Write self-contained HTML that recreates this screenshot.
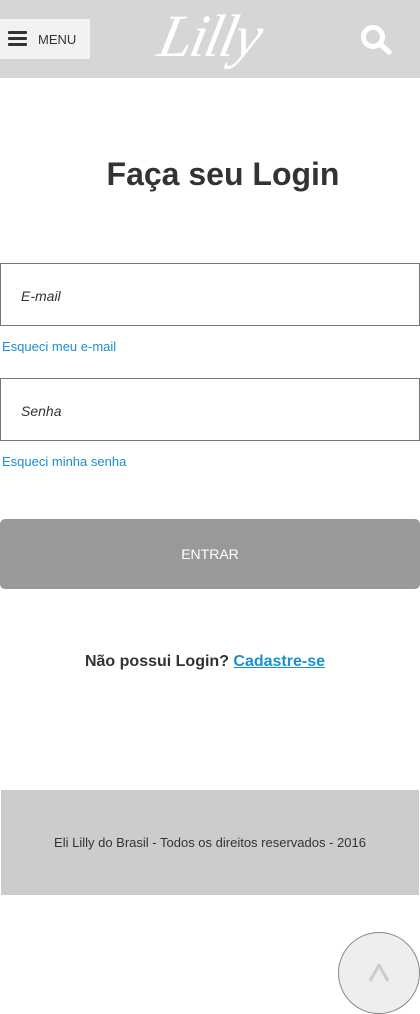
<!DOCTYPE html>
<html><head><meta charset="utf-8"><style>
*{margin:0;padding:0;box-sizing:border-box}
body{width:420px;height:1014px;background:#fff;font-family:"Liberation Sans",sans-serif;position:relative;overflow:hidden}
.hdr{position:absolute;top:0;left:0;width:420px;height:78px;background:#d6d6d6}
.menu{position:absolute;left:0;top:19px;width:90px;height:40px;background:#f2f2f2}
.menu .bars{position:absolute;left:8px;top:12px;width:19px;height:15px}
.menu .bars i{display:block;height:3px;background:#333;margin-bottom:3px;border-radius:1px}
.menu span{position:absolute;left:38px;top:13px;font-size:13px;color:#333}
.logo{position:absolute;left:160px;top:2px;font-family:"Liberation Serif",serif;font-style:italic;font-size:60px;color:#fff;letter-spacing:-2px;transform:skewX(-12deg)}
h1{position:absolute;top:156px;width:100%;text-align:center;font-size:32px;font-weight:bold;color:#333;left:13px}
.inp{position:absolute;left:0;width:420px;height:63px;border:1px solid #777;font-style:italic;font-size:14px;color:#333;padding:24px 0 0 20px}
.lnk{position:absolute;left:2px;font-size:13px;color:#1a8fd0}
.btn{position:absolute;left:0;top:519px;width:420px;height:70px;background:#999;border-radius:5px;color:#fff;font-size:14px;text-align:center;line-height:70px}
.reg{position:absolute;top:653px;width:100%;text-align:center;font-size:16px;font-weight:bold;color:#333;left:-5px}
.reg a{color:#1a8fd0;text-decoration:underline}
.ft{position:absolute;left:1px;top:790px;width:418px;height:105px;background:#ccc;font-size:13px;color:#333;text-align:center;line-height:106px}
.up{position:absolute;left:338px;top:932px;width:82px;height:82px;border-radius:50%;background:#eee;border:1px solid #888}
</style></head><body>
<div class="hdr">
 <div class="menu"><div class="bars"><i></i><i></i><i></i></div><span>MENU</span></div>
 <div class="logo">Lilly</div>
 <svg style="position:absolute;left:360px;top:24px" width="34" height="32" viewBox="0 0 34 32"><circle cx="13" cy="13" r="9.5" fill="none" stroke="#fff" stroke-width="5"/><line x1="20" y1="20" x2="29" y2="28" stroke="#fff" stroke-width="5.5" stroke-linecap="round"/></svg>
</div>
<h1>Faça seu Login</h1>
<div class="inp" style="top:263px">E-mail</div>
<div class="lnk" style="top:339px">Esqueci meu e-mail</div>
<div class="inp" style="top:378px">Senha</div>
<div class="lnk" style="top:454px">Esqueci minha senha</div>
<div class="btn">ENTRAR</div>
<div class="reg">Não possui Login? <a>Cadastre-se</a></div>
<div class="ft">Eli Lilly do Brasil - Todos os direitos reservados - 2016</div>
<div class="up"><svg style="position:absolute;left:30px;top:31px" width="20" height="18" viewBox="0 0 20 18"><path d="M1 17 L10 1 L19 17" fill="none" stroke="#ccc" stroke-width="3"/></svg></div>
</body></html>
